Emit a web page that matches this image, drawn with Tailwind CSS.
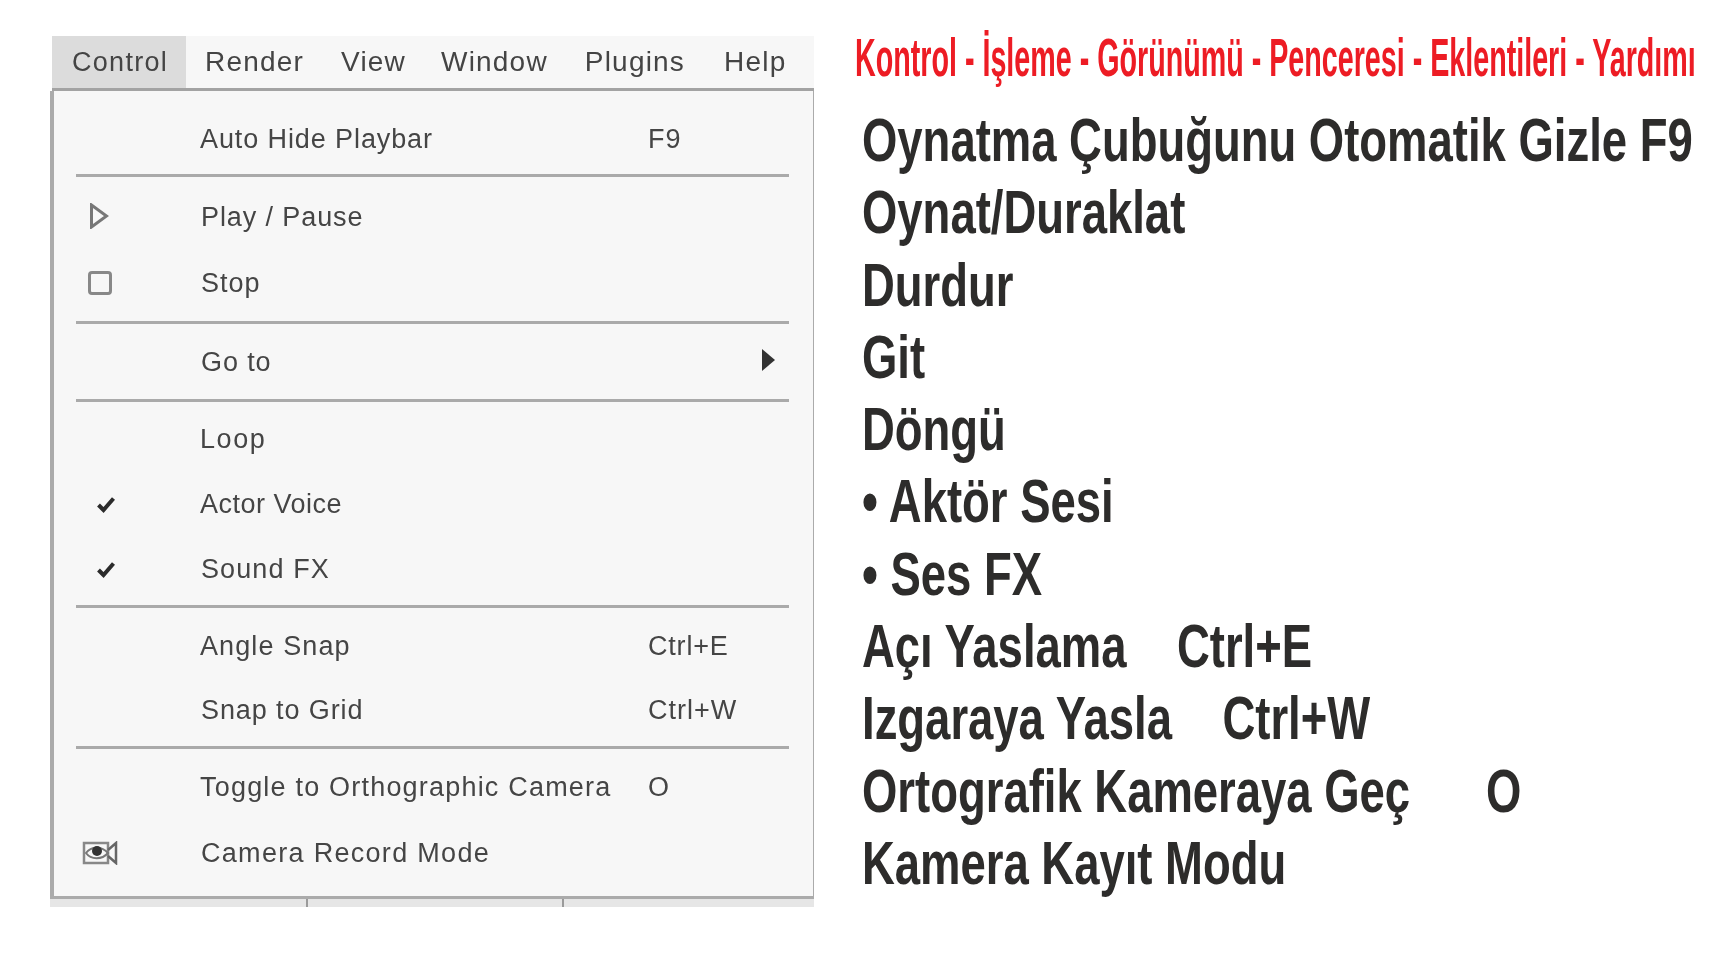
<!DOCTYPE html>
<html lang="en">
<head>
<meta charset="utf-8">
<title>Control menu</title>
<script src="https://cdn.jsdelivr.net/npm/@tailwindcss/browser@4"></script>
</head>
<body class="bg-white">
<div class="h-[966px] w-[1729px] overflow-hidden flex items-start font-['Liberation_Sans',Arial,sans-serif]">
  <div class="ml-[50px] mt-[36px] w-[764px] shrink-0 text-[27px] tracking-[1.1px] text-[#454545] blur-[0.4px]">
    <div class="ml-[2px] h-[55px] flex items-stretch bg-[#f7f7f7] border-b-[3px] border-[#a3a3a3] text-[28px] tracking-[1.2px] text-[#444]">
      <div class="w-[134px] pl-[20px] flex items-center bg-[#dcdcdc] text-[27px] tracking-[1.3px]">Control</div>
      <div class="ml-[19px] flex items-center">Render</div>
      <div class="ml-[37px] flex items-center">View</div>
      <div class="ml-[35px] flex items-center">Window</div>
      <div class="ml-[37px] flex items-center">Plugins</div>
      <div class="ml-[39px] flex items-center">Help</div>
    </div>
    <div class="bg-[#f7f7f7] border-l-[4px] border-r border-b-[3px] border-[#ababab] h-[808px]">
      <div class="pt-[15px] pb-[2px]">
        <div class="h-[66px] flex items-center"><div class="w-[146px]"></div><div class="w-[448px] tracking-[0.9px]">Auto Hide Playbar</div><div>F9</div></div>
      </div>
      <div class="h-[3px] ml-[22px] mr-[24px] bg-[#aaaaaa]"></div>
      <div class="pt-[7px] pb-[4px]">
        <div class="h-[66px] flex items-center"><div class="w-[146px]"><svg class="ml-[35px] -mt-[3px]" width="20" height="26" viewBox="0 0 20 26" fill="none" stroke="#777" stroke-width="3"><path d="M2.5 2v22l15-11z"/></svg></div><div class="w-[448px] pl-[1px] tracking-[0.9px]">Play / Pause</div></div>
        <div class="h-[67px] flex items-center"><div class="w-[146px]"><svg class="ml-[34px] -mt-[2px]" width="24" height="24" viewBox="0 0 24 24" fill="none" stroke="#888" stroke-width="3"><rect x="1.5" y="1.5" width="21" height="21" rx="2.5"/></svg></div><div class="w-[448px] pl-[1px] tracking-[1px]">Stop</div></div>
      </div>
      <div class="h-[3px] ml-[22px] mr-[24px] bg-[#aaaaaa]"></div>
      <div class="pt-[5px] pb-[3px]">
        <div class="h-[67px] flex items-center relative"><div class="w-[146px]"></div><div class="w-[448px] pl-[1px] tracking-[0.9px]">Go to</div><svg class="absolute left-[707px] top-[19px]" width="14" height="24" viewBox="0 0 14 24" fill="#333"><path d="M1 1l13 11L1 23z"/></svg></div>
      </div>
      <div class="h-[3px] ml-[22px] mr-[24px] bg-[#aaaaaa]"></div>
      <div class="pt-[5px] pb-[3px]">
        <div class="h-[65px] flex items-center"><div class="w-[146px]"></div><div class="w-[448px] tracking-[1.6px]">Loop</div></div>
        <div class="h-[65px] flex items-center"><div class="w-[146px]"><svg class="ml-[43px]" width="18" height="18" viewBox="0 0 18 18" fill="none" stroke="#2b2b2b" stroke-width="4"><path d="M1.5 9l5 5L16.5 2.5"/></svg></div><div class="w-[448px] tracking-[0.5px]">Actor Voice</div></div>
        <div class="h-[65px] flex items-center"><div class="w-[146px]"><svg class="ml-[43px]" width="18" height="18" viewBox="0 0 18 18" fill="none" stroke="#2b2b2b" stroke-width="4"><path d="M1.5 9l5 5L16.5 2.5"/></svg></div><div class="w-[448px] pl-[1px] tracking-[1.1px]">Sound FX</div></div>
      </div>
      <div class="h-[3px] ml-[22px] mr-[24px] bg-[#aaaaaa]"></div>
      <div class="pt-[6px] pb-[4px]">
        <div class="h-[64px] flex items-center"><div class="w-[146px]"></div><div class="w-[448px] tracking-[1.1px]">Angle Snap</div><div class="tracking-[0.8px]">Ctrl+E</div></div>
        <div class="h-[64px] flex items-center"><div class="w-[146px]"></div><div class="w-[448px] pl-[1px] tracking-[0.9px]">Snap to Grid</div><div class="tracking-[1px]">Ctrl+W</div></div>
      </div>
      <div class="h-[3px] ml-[22px] mr-[24px] bg-[#aaaaaa]"></div>
      <div class="pt-[5px]">
        <div class="h-[66px] flex items-center"><div class="w-[146px]"></div><div class="w-[448px] whitespace-nowrap tracking-[1.2px]">Toggle to Orthographic Camera</div><div>O</div></div>
        <div class="h-[66px] flex items-center"><div class="w-[146px]"><svg class="ml-[28px]" width="36" height="24" viewBox="0 0 36 24" fill="none"><path d="M2 2h24v20H2z" stroke="#888" stroke-width="2.5"/><path d="M26 9l8-7v20l-8-7" stroke="#666" stroke-width="2.5"/><path d="M4 12c5-7 16-7 22 0c-6 7-17 7-22 0z" stroke="#777" stroke-width="2"/><circle cx="15" cy="10" r="5" fill="#333"/></svg></div><div class="w-[448px] pl-[1px] tracking-[1.3px]">Camera Record Mode</div></div>
      </div>
    </div>
    <div class="h-[8px] bg-[#e6e6e6] flex">
      <div class="ml-[256px] w-[258px] border-x-2 border-[#9a9a9a]"></div>
    </div>
  </div>
  <div class="ml-[41px] shrink-0 font-bold">
    <div class="origin-left scale-x-[0.531] whitespace-nowrap h-[80px] text-[54px] leading-[48px] pt-[33px] text-[#ed1c24]">Kontrol - İşleme - Görünümü - Penceresi - Eklentileri - Yardımı</div>
    <div class="ml-[7px] pt-[24px] text-[62px] leading-[72.3px] text-[#2d2c2b]">
      <div class="origin-left scale-x-[0.733] whitespace-pre">Oynatma Çubuğunu Otomatik Gizle F9</div>
      <div class="origin-left scale-x-[0.733] whitespace-pre">Oynat/Duraklat</div>
      <div class="origin-left scale-x-[0.733] whitespace-pre">Durdur</div>
      <div class="origin-left scale-x-[0.733] whitespace-pre">Git</div>
      <div class="origin-left scale-x-[0.733] whitespace-pre">Döngü</div>
      <div class="origin-left scale-x-[0.733] whitespace-pre">• Aktör Sesi</div>
      <div class="origin-left scale-x-[0.733] whitespace-pre">• Ses FX</div>
      <div class="origin-left scale-x-[0.733] whitespace-pre">Açı Yaslama    Ctrl+E</div>
      <div class="origin-left scale-x-[0.733] whitespace-pre">Izgaraya Yasla    Ctrl+W</div>
      <div class="origin-left scale-x-[0.733] whitespace-pre">Ortografik Kameraya Geç      O</div>
      <div class="origin-left scale-x-[0.733] whitespace-pre">Kamera Kayıt Modu</div>
    </div>
  </div>
</div>
</body>
</html>
